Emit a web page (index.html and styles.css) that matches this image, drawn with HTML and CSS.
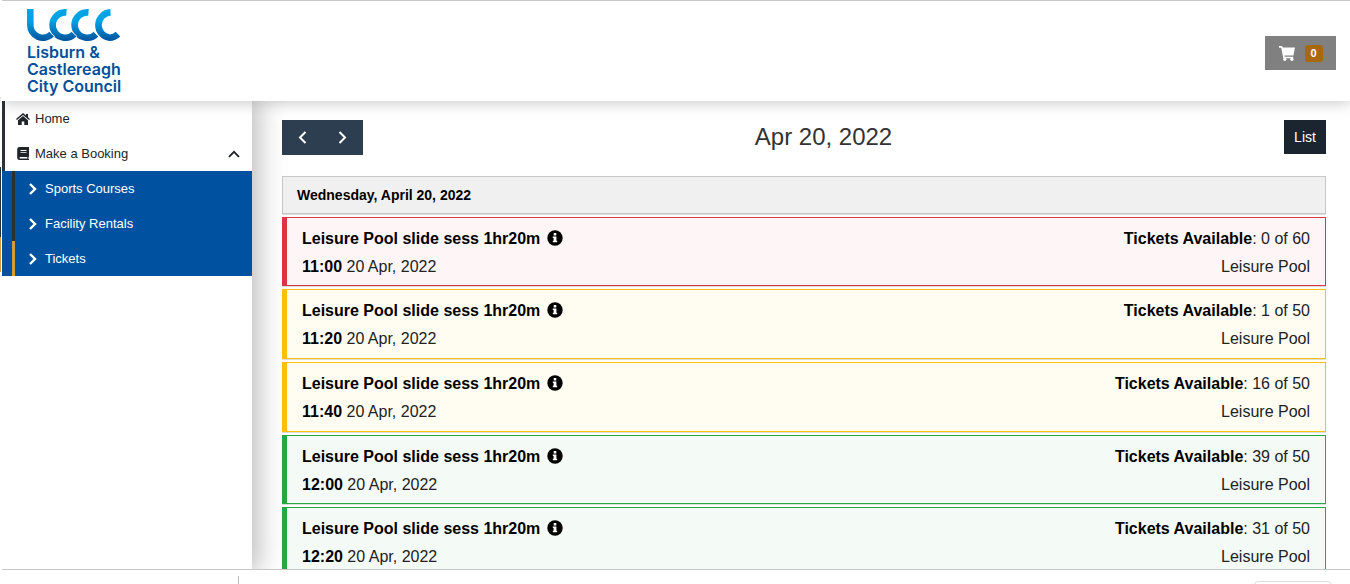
FILE: index.html
```html
<!DOCTYPE html>
<html lang="en">
<head>
<meta charset="utf-8">
<title>Tickets - Lisburn &amp; Castlereagh City Council</title>
<link rel="stylesheet" href="styles.css">
</head>
<body>
<svg class="sprite" aria-hidden="true">
  <symbol id="info" viewBox="0 0 16 16"><circle cx="8" cy="8" r="7.7"/><path fill="#fff" d="M6.700 3h2.600v2.400H6.700zM5.800 6.500h3.600v4.200h.8v1.600H5.800v-1.600h.8V8.100h-.8z"/></symbol>
  <symbol id="chevron" viewBox="0 0 10 12"><path d="M2 1l5 5-5 5" fill="none" stroke="currentColor" stroke-width="2.4"/></symbol>
</svg>
<div class="edge"></div>
<div class="page">
  <header class="header">
    <a class="logo" href="#">
      <svg class="logo-mark" viewBox="0 0 93 33" aria-hidden="true">
        <defs><linearGradient id="blue" gradientUnits="userSpaceOnUse" x1="0" y1="0" x2="0" y2="33"><stop offset=".35" stop-color="#00a4e4"/><stop offset="1" stop-color="#004f9a"/></linearGradient></defs>
        <g fill="none" stroke="url(#blue)" stroke-width="6.600">
          <path d="M3.300 0V16A12.700 12.700 0 0 0 24.800 25.200"/>
          <path d="M39.500 3.400A12.700 12.700 0 1 0 47.200 25.200"/>
          <path d="M61.500 3.400A12.700 12.700 0 1 0 69.200 25.200"/>
          <path d="M83.500 3.400A12.700 12.700 0 0 0 82.700 28.700Q87.500 28.700 91 25.200"/>
        </g>
        <path d="M22.300 22.300l5.400 5.400M44.700 22.300l5.400 5.400M66.700 22.300l5.400 5.400" stroke="#fff" stroke-width="1"/>
      </svg>
      <span class="logo-text">Lisburn &amp;</span>
      <span class="logo-text">Castlereagh</span>
      <span class="logo-text">City Council</span>
    </a>
    <button class="cart" type="button" aria-label="Cart">
      <svg width="16" height="15" viewBox="0 0 16 15" fill="#fff" aria-hidden="true"><path d="M0 0h3.200l.5 1.600H16l-1.600 7.800H5.300l.3 1.400h8.600v1.500H4.300L2.200 1.700H0z"/><circle cx="5.800" cy="13.300" r="1.600"/><circle cx="12.900" cy="13.300" r="1.600"/></svg>
      <span class="badge">0</span>
    </button>
  </header>
  <div class="body">
    <nav class="sidebar">
      <div class="menu">
        <a class="menu-item" href="#"><svg width="14" height="12" viewBox="0 0 14 12" fill="currentColor" aria-hidden="true"><path d="M7 0l3 2.500V1h2v3.200l2 1.700-.9 1L7 1.900.9 6.900 0 5.900z"/><path d="M7 3.100l5 4.100V12H8.300V8.500H5.700V12H2V7.200z"/></svg>Home</a>
        <a class="menu-item" href="#"><svg width="14" height="13" viewBox="0 0 14 13" aria-hidden="true"><path fill="currentColor" d="M3.500 0H13v9.500l-.5.500v2h.5v1H3.500A2.300 2.300 0 0 1 1.200 10.700V2.300A2.300 2.300 0 0 1 3.500 0z"/><path fill="#fff" d="M4.500 3h6v.9h-6zM4.500 4.900h6v.8h-6zM3.700 10h7.600v1.400H3.700z"/></svg>Make a Booking
          <svg class="caret" width="12" height="8" viewBox="0 0 12 8" fill="none" stroke="currentColor" stroke-width="1.800" aria-hidden="true"><path d="M1 6.800L6 1.800l5 5"/></svg></a>
      </div>
      <div class="submenu">
        <a class="sub-item" href="#"><svg width="10" height="12"><use href="#chevron"/></svg>Sports Courses</a>
        <a class="sub-item" href="#"><svg width="10" height="12"><use href="#chevron"/></svg>Facility Rentals</a>
        <a class="sub-item active" href="#"><svg width="10" height="12"><use href="#chevron"/></svg>Tickets</a>
      </div>
    </nav>
    <main class="main">
      <div class="toolbar">
        <div class="pager">
          <button type="button" aria-label="Previous day"><svg width="9" height="13" viewBox="0 0 9 13" fill="none" stroke="currentColor" stroke-width="2" aria-hidden="true"><path d="M7.500 1l-5.500 5.500 5.500 5.500"/></svg></button>
          <button type="button" aria-label="Next day"><svg width="9" height="13" viewBox="0 0 9 13" fill="none" stroke="currentColor" stroke-width="2" aria-hidden="true"><path d="M1.500 1L7 6.500 1.500 12"/></svg></button>
        </div>
        <h1 class="title">Apr 20, 2022</h1>
        <button class="list-button" type="button">List</button>
      </div>
      <section class="events">
        <h2 class="day">Wednesday, April 20, 2022</h2>
        <article class="event full">
          <div><div><b>Leisure Pool slide sess 1hr20m</b><svg class="info"><use href="#info"/></svg></div><div><b>11:00</b> 20 Apr, 2022</div></div>
          <div class="right"><div><b>Tickets Available</b>: 0 of 60</div><div>Leisure Pool</div></div>
        </article>
        <article class="event limited">
          <div><div><b>Leisure Pool slide sess 1hr20m</b><svg class="info"><use href="#info"/></svg></div><div><b>11:20</b> 20 Apr, 2022</div></div>
          <div class="right"><div><b>Tickets Available</b>: 1 of 50</div><div>Leisure Pool</div></div>
        </article>
        <article class="event limited">
          <div><div><b>Leisure Pool slide sess 1hr20m</b><svg class="info"><use href="#info"/></svg></div><div><b>11:40</b> 20 Apr, 2022</div></div>
          <div class="right"><div><b>Tickets Available</b>: 16 of 50</div><div>Leisure Pool</div></div>
        </article>
        <article class="event open">
          <div><div><b>Leisure Pool slide sess 1hr20m</b><svg class="info"><use href="#info"/></svg></div><div><b>12:00</b> 20 Apr, 2022</div></div>
          <div class="right"><div><b>Tickets Available</b>: 39 of 50</div><div>Leisure Pool</div></div>
        </article>
        <article class="event open">
          <div><div><b>Leisure Pool slide sess 1hr20m</b><svg class="info"><use href="#info"/></svg></div><div><b>12:20</b> 20 Apr, 2022</div></div>
          <div class="right"><div><b>Tickets Available</b>: 31 of 50</div><div>Leisure Pool</div></div>
        </article>
      </section>
    </main>
  </div>
  <footer class="footer"><div class="footer-left"></div><div class="footer-box"></div></footer>
</div>
</body>
</html>
```

FILE: styles.css
```css
* { box-sizing: border-box; }

body {
  margin: 0;
  height: 100vh;
  overflow: hidden;
  display: flex;
  background: #fff;
  font-family: "Liberation Sans", Arial, sans-serif;
  font-size: 16px;
  color: #000;
}

a { color: inherit; text-decoration: none; }
button { border: 0; padding: 0; font: inherit; color: #fff; display: flex; align-items: center; justify-content: center; }
.sprite { position: absolute; width: 0; height: 0; }

/* Thin strip on the window's left side */
.edge {
  width: 2px;
  flex: none;
  background: linear-gradient(#fff 97px, #e2e2e2 97px, #fff 103px, #fff 167px, #2b3138 167px, #2b3138 237px, #d69a38 237px, #d69a38 272px, #fff 272px);
  border-right: 1px solid #fff;
}

.page { flex: 1; min-width: 0; display: flex; flex-direction: column; overflow: hidden; }

.header {
  flex: none;
  height: 101px;
  border-top: 1px solid #c8c8c8;
  padding: 8px 14px 0 25px;
  display: flex;
  justify-content: space-between;
  align-items: flex-start;
  background: #fff;
  box-shadow: 0 2px 14px rgba(0, 0, 0, .22);
  z-index: 4;
}

.logo { display: block; color: #004f9a; }
.logo-mark { display: block; width: 93px; height: 33px; margin-bottom: 2px; }
.logo-text { display: block; font: 600 16px/17px Inter, sans-serif; }

.cart { width: 71px; height: 34px; margin-top: 27px; gap: 10px; background: #808080; }
.badge { width: 18px; border-radius: 3px; background: #a8680e; font-size: 11px; font-weight: 700; line-height: 17px; text-align: center; }

.body { flex: 1; min-height: 0; display: flex; }

.sidebar { width: 250px; flex: none; background: #fff; color: #212529; font-size: 13px; box-shadow: 2px 0 26px 4px rgba(0, 0, 0, .28); z-index: 3; clip-path: inset(0 -40px 0 0); }
.menu { border-left: 3px solid #2b3138; }
.menu-item { height: 35px; padding: 0 12px 0 11px; display: flex; align-items: center; gap: 5px; }
.caret { margin-left: auto; }
.submenu { padding-left: 10px; background: #0052a0; color: #fff; }
.sub-item { height: 35px; border-left: 3px solid #2b3138; padding-left: 13px; display: flex; align-items: center; gap: 7px; }
.sub-item svg { flex: none; }
.sub-item.active { border-left-color: #d69a38; }

.main { flex: 1; min-width: 0; overflow: hidden; padding: 19px 24px 0 30px; }
.toolbar { display: flex; justify-content: space-between; align-items: flex-start; }
.pager { display: flex; background: #2c3e50; }
.pager button { width: 40px; height: 35px; background: none; }
.pager button + button { width: 41px; }
.title { margin: 0; font-size: 24px; font-weight: 400; line-height: 34px; color: #333; }
.list-button { width: 42px; height: 34px; background: #1a252f; font-size: 14px; }

.events { margin-top: 21px; display: flex; flex-direction: column; gap: 3px; }
.day { margin: 0; padding: 0 14px; border: 1px solid #c8c8c8; background: #f0f0f0; font-size: 14px; line-height: 36px; box-shadow: 0 1px 0 #ddd; }
.event { padding: 7px 15px 4px; border: 1px solid; border-left-width: 5px; display: flex; justify-content: space-between; line-height: 28px; box-shadow: 0 1px 0 #ddd; }
.event b { font-weight: 700; color: #000; }
.event > div { color: #222; }
.full { border-color: #dc3545; background: #fef5f6; }
.limited { padding-bottom: 5px; border-color: #ffc107; background: #fffcf2; }
.open { border-color: #28a745; background: #f4faf6; }
.right { text-align: right; }
.info { width: 16px; height: 16px; margin-left: 7px; vertical-align: -2px; }

.footer { flex: none; height: 15px; overflow: hidden; border-top: 1px solid #c8c8c8; padding-right: 18px; display: flex; justify-content: space-between; background: #fff; z-index: 4; }
.footer-left { width: 237px; margin-top: 6px; border-right: 1px solid #bbb; }
.footer-box { width: 78px; height: 20px; margin-top: 11px; border: 1px solid #ddd; border-radius: 4px; }
```
